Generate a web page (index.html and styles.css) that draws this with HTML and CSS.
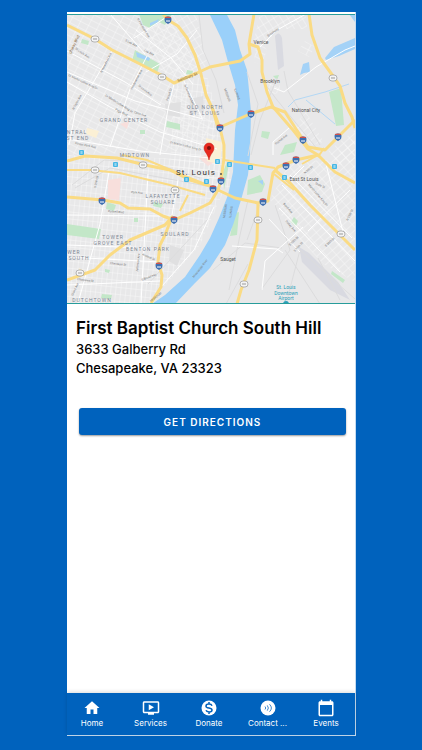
FILE: index.html
```html
<!DOCTYPE html>
<html lang="en">
<head>
    <meta charset="utf-8">
    <meta name="viewport" content="width=device-width, initial-scale=1">
    <title>First Baptist Church South Hill</title>
    <link rel="stylesheet" href="styles.css">
</head>
<body>
<div class="app">
    <div class="map">
        <svg viewBox="67 15 288 288" role="img" aria-label="Map of St. Louis">
            <defs>
                <pattern id="grid-west" width="9" height="6" patternUnits="userSpaceOnUse" patternTransform="rotate(27)">
                    <path d="M0 0H9M0 0V6" class="street"/>
                </pattern>
                <pattern id="grid-north" width="6" height="8" patternUnits="userSpaceOnUse" patternTransform="rotate(-32)">
                    <path d="M0 0H6M0 0V8" class="street"/>
                </pattern>
                <pattern id="grid-south" width="5" height="7" patternUnits="userSpaceOnUse" patternTransform="rotate(6)">
                    <path d="M0 0H5M0 0V7" class="street"/>
                </pattern>
                <pattern id="grid-east" width="6" height="8" patternUnits="userSpaceOnUse" patternTransform="rotate(48)">
                    <path d="M0 0H6M0 0V8" class="street"/>
                </pattern>
                <g id="shield">
                    <path d="M-3-3Q0-4 3-3Q5 2 0 4Q-5 2-3-3Z" fill="#3f6fb0"/>
                    <path d="M-3-3Q0-4 3-3V-2H-3Z" fill="#d0524c"/>
                    <path d="M-2 1H2" stroke="#fff"/>
                </g>
                <g id="route">
                    <rect x="-4" y="-3" width="8" height="6" rx="3" fill="#f4f4f4" stroke="#999" stroke-width=".7"/>
                    <path d="M-2 0H2" stroke="#999"/>
                </g>
                <g id="station">
                    <rect x="-2" y="-2" width="5" height="5" rx="1" fill="#45b7e5"/>
                    <path d="M0-1V2M1-1V2" stroke="#fff" stroke-width=".5"/>
                </g>
            </defs>

            <rect x="67" y="14" width="288" height="290" fill="#e8e8e9"/>

            <!-- street grids -->
            <path d="M67 14H168L201 74L174 83L210 105L217 150L67 155Z" fill="url(#grid-west)"/>
            <path d="M140 14H196L208 66L180 79L134 60Z" fill="url(#grid-north)"/>
            <path d="M67 155L217 160L222 195L200 245L150 303H67Z" fill="url(#grid-south)"/>
            <path d="M174 84L207 76L222 130L233 190L214 185L170 170Z" fill="url(#grid-south)"/>
            <path d="M270 200L290 162L330 160L355 135V282L325 265L300 240Z" fill="url(#grid-east)"/>
            <path d="M260 14H306L307 29L278 29L265 45L254 40Z" fill="url(#grid-north)"/>
            <path d="M256 43H262L267 50L261 65L254 62Z M298 51L305 41L315 47L309 57Z M265 83L280 79L280 92L269 96Z" fill="url(#grid-west)"/>
            <path d="M294 125L306 112L324 142L307 146Z M328 151L355 130V160L340 166Z" fill="url(#grid-east)"/>

            <!-- parks and blocks -->
            <g fill="#c3e7c8">
                <path d="M139 14H172L165 25L159 22L150 28L143 25Z"/>
                <path d="M135 50L160 64L157 73L132 61Z"/>
                <path d="M82 39L89 41L88 45L81 43Z M187 70L193 71L192 75L186 74Z M167 121L180 124V130L166 127Z"/>
                <path d="M329 92L341 88L344 125L336 126Z"/>
                <path d="M248 180L260 175L265 184L262 192L247 195Z"/>
                <path d="M67 224L101 229L99 239L67 235Z M107 202L116 205L114 211L106 209Z M154 202L163 204L161 208L153 206Z"/>
                <path d="M235 213L239 212L237 235L230 236Z M262 131L270 132L268 139L261 137Z M285 145L297 142L294 152L280 155Z"/>
                <path d="M291 222L294 217L298 221L296 226Z M332 271L345 280L343 283L331 274Z M105 269L110 270L109 273L105 272Z M102 294L112 295L111 299L101 298Z M223 172L227 162L229 164L224 190Z"/>
                <path d="M273 76L279 75L277 80Z M134 218H138V222H134Z M140 130H145V134H140Z"/>
            </g>
            <path d="M108 180L121 178L119 200L108 199Z M120 124L129 121L127 129Z M199 158L212 151L218 160L208 166Z" fill="#f8dfdc"/>
            <path d="M87 128L99 131L96 138L86 134Z M206 138L222 142L220 165L207 161Z M79 268L85 271L83 275L78 273Z" fill="#fbf0d5"/>
            <path d="M275 36Q279 30 282 38L284 66L278 70Z M299 247L309 253L338 282L350 300L330 290L302 262Z" fill="#d9dae1"/>
            <path d="M190 99L203 96L204 112L189 115Z M165 104L181 102L180 117L166 115Z M170 245L184 250L177 266L169 261Z" fill="#e0e0e1"/>

            <!-- water -->
            <path d="M210 15H227L235 30L240 50L247 70L249 90L251 112L250 155L248 175L241 200L233 225L225 245L210 268L195 283L175 304H152L165 295L185 277L200 255L210 238L219 218L228 195L233 172L235 130L238 105L235 85L228 62L222 40Z" fill="#9ad0fa"/>
            <path d="M325 58L334 47L355 38V49L339 56L326 60Z M300 75L303 64L309 62L310 72L304 73Z M349 14H355V22Z M136 52L150 58L149 61L137 57Z M150 23L159 19L158 22L150 26Z M258 181L263 180L263 185Z" fill="#a4d2f7"/>
            <path d="M288 107L295 100L325 92L349 84M306 100L335 124" class="creek"/>

            <!-- railways and minor roads -->
            <g class="rail">
                <path d="M247 72L258 104L248 156M277 78L260 120L251 155M262 80L277 100L318 150M284 71L288 91L320 145M199 15L203 50L216 80L224 113"/>
                <path d="M72 185L104 160L150 162L200 178M75 188L110 168L212 187M248 200L240 235L229 290M247 240L260 204M261 290L290 250L275 205M286 304L300 250L355 299"/>
                <path d="M213 270L245 243L282 248M248 264L226 304M285 250L320 304M318 258L340 300M209 218L170 260L148 284"/>
            </g>
            <g class="avenue">
                <path d="M67 72L135 101L203 119M67 82L110 107L160 132L217 149M67 139L140 151L210 158M112 51L75 113L69 145M147 56L130 89L110 147M174 84L168 109L160 155M183 79L202 118"/>
                <path d="M136 30L171 58L193 84M134 38L165 18M110 14L145 54M67 51L125 82L161 105M197 30L177 54L146 72"/>
                <path d="M274 88L284 92L316 67L345 50L355 46M260 47L277 30L306 14M289 128L273 142V155M232 246L277 249L283 253"/>
                <path d="M109 172L100 224L78 303M148 174L141 303M67 215L160 216M67 245L147 248M67 257L160 262M67 285L160 281M214 207L194 250L162 286M178 180L172 215"/>
                <path d="M282 185L355 261M279 208L340 272M290 175L352 238M325 160L345 240M303 227L265 261L262 290M269 219L300 252M350 190L308 231M304 166L286 184"/>
            </g>

            <!-- highways -->
            <g class="highway">
                <path d="M67 25L95 39L112 50L140 64L163 76L174 83L197 73L210 67L240 61L250 54L249 44L254 14"/>
                <path d="M163 14L168 20L178 26L187 38L195 55L201 74L206 95L213 110L220 128L224 145V158L221 180L218 190"/>
                <path d="M213 110L218 128L250 114L271 107L285 112L298 132L308 147L325 150L335 140L355 120"/>
                <path d="M249 44L258 47L262 60L262 72L267 92L273 107L293 130L308 149L318 155"/>
                <path d="M309 14L312 35L320 58L333 76L340 86L345 103L352 117L355 128"/>
                <path d="M67 197L103 200L120 203L128 208L150 209L163 216L174 220L190 213L210 203L218 190L235 198L258 203"/>
                <path d="M67 161L85 156L117 158L145 165L170 170L190 180L210 186"/>
                <path d="M67 280L95 270L110 255L130 240L165 225L172 217L165 235L160 245L158 262L162 275L161 287L151 303"/>
                <path d="M258 203L257 240L249 270L241 290L237 304M258 203L268 201L273 173L278 167L296 160L318 155L335 172L355 183"/>
                <path d="M275 170L290 183L310 205L340 235L355 250"/>
            </g>
            <g class="ramp">
                <path d="M67 170L90 170L120 173L170 185L205 195M122 155L147 160L180 174L215 188M188 195L180 211"/>
                <path d="M224 160L275 168M274 174L294 190M318 155L302 164M324 148L318 157"/>
            </g>

            <g>
                <use href="#shield" x="168" y="20"/>
                <use href="#shield" x="220" y="128"/>
                <use href="#shield" x="251" y="114"/>
                <use href="#shield" x="303" y="140"/>
                <use href="#shield" x="338" y="137"/>
                <use href="#shield" x="102" y="201"/>
                <use href="#shield" x="174" y="220"/>
                <use href="#shield" x="159" y="266"/>
                <use href="#shield" x="213" y="189"/>
                <use href="#shield" x="221" y="181"/>
                <use href="#shield" x="263" y="202"/>
                <use href="#shield" x="286" y="166"/>
                <use href="#shield" x="296" y="160"/>
                <use href="#route" x="95" y="39"/>
                <use href="#route" x="162" y="77"/>
                <use href="#route" x="333" y="78"/>
                <use href="#route" x="95" y="170"/>
                <use href="#route" x="143" y="165"/>
                <use href="#route" x="175" y="190"/>
                <use href="#route" x="80" y="273"/>
                <use href="#route" x="258" y="220"/>
                <use href="#route" x="244" y="284"/>
                <use href="#route" x="341" y="234"/>
                <use href="#station" x="81" y="152"/>
                <use href="#station" x="115" y="164"/>
                <use href="#station" x="186" y="179"/>
                <use href="#station" x="206" y="181"/>
                <use href="#station" x="217" y="161"/>
                <use href="#station" x="229" y="164"/>
                <use href="#station" x="250" y="167"/>
                <use href="#station" x="284" y="177"/>
                <use href="#station" x="334" y="166"/>
            </g>

            <g class="area">
                <text x="124" y="122">GRAND CENTER</text>
                <text x="135" y="157">MIDTOWN</text>
                <text x="205" y="109">OLD NORTH</text>
                <text x="205" y="115">ST. LOUIS</text>
                <text x="77" y="134">NTRAL</text>
                <text x="78" y="140">ST END</text>
                <text x="163" y="198">LAFAYETTE</text>
                <text x="163" y="204">SQUARE</text>
                <text x="175" y="236">SOULARD</text>
                <text x="113" y="239">TOWER</text>
                <text x="113" y="245">GROVE EAST</text>
                <text x="148" y="251">BENTON PARK</text>
                <text x="74" y="254">WER</text>
                <text x="79" y="260">SOUTH</text>
                <text x="92" y="302">DUTCHTOWN</text>
            </g>
            <g class="town">
                <text x="261" y="44">Venice</text>
                <text x="270" y="83">Brooklyn</text>
                <text x="306" y="112">National City</text>
                <text x="304" y="181">East St Louis</text>
                <text x="228" y="261">Sauget</text>
            </g>
            <g class="road">
                <text transform="translate(178 82) rotate(-20)" class="road-brown">Salisbury St</text>
                <text transform="translate(71 54) rotate(-64)" class="road-brown">ghway Blvd</text>
                <text transform="translate(137 19) rotate(59)">N Florissant Ave</text>
                <text transform="translate(125 41) rotate(27)">S Lee Ave</text>
                <text transform="translate(144 51) rotate(27)">Lee Ave</text>
                <text transform="translate(75 49) rotate(35)">St Louis Ave</text>
                <text transform="translate(102 73) rotate(-64)">N Newstead Ave</text>
                <text transform="translate(132 90) rotate(-62)">Vandeventer Ave</text>
                <text transform="translate(138 86) rotate(38)">St Louis Ave</text>
                <text transform="translate(68 76) rotate(25)">Dr Martin Luther King Dr</text>
                <text transform="translate(105 96) rotate(32)">Dr Martin Luther King Dr</text>
                <text transform="translate(115 110) rotate(28)">Page Blvd</text>
                <text transform="translate(134 113) rotate(18)">Cass Ave</text>
                <text transform="translate(74 110) rotate(-62)">N Taylor Ave</text>
                <text transform="translate(168 101) rotate(-72)">Parnell St</text>
                <text transform="translate(184 85) rotate(67)">N Florissant Ave</text>
                <text transform="translate(75 144) rotate(12)">Forest Park Ave</text>
                <text transform="translate(170 143) rotate(14)">Dr Martin Luther King Dr</text>
                <text transform="translate(268 37) rotate(-35)">Broadway</text>
                <text transform="translate(276 145) rotate(-39)">Pocket Ave</text>
                <text transform="translate(131 193) rotate(5)">Park Ave</text>
                <text transform="translate(108 212) rotate(5)">Russell Blvd</text>
                <text transform="translate(96 188) rotate(-78)">S 39th St</text>
                <text transform="translate(110 264) rotate(7)">Cherokee St</text>
                <text transform="translate(77 280) rotate(7)">Chippewa St</text>
                <text transform="translate(138 272) rotate(-84)">Jefferson Ave</text>
                <text transform="translate(142 255) rotate(24)">Arsenal St</text>
                <text transform="translate(142 281) rotate(-22)">S Broadway</text>
                <text transform="translate(73 296) rotate(-65)">Grand Ave</text>
                <text transform="translate(283 204) rotate(49)">Bond Ave</text>
                <text transform="translate(285 221) rotate(49)">Trolley Ave</text>
                <text transform="translate(308 185) rotate(49)">Martin Luther King Dr</text>
                <text transform="translate(315 184) rotate(25)">State St</text>
                <text transform="translate(290 246) rotate(-44)">S 10th St</text>
                <text transform="translate(295 252) rotate(-48)">S 15th St</text>
                <text transform="translate(326 247) rotate(-43)">S 20th St</text>
                <text transform="translate(305 174) rotate(-40)">N 9th St</text>
                <text transform="translate(348 221) rotate(-65)">N 25th St</text>
                <text transform="translate(224 89) rotate(70)">MISSOURI</text>
                <text transform="translate(234 89) rotate(70)">ILLINOIS</text>
                <text transform="translate(225 218) rotate(-81)">MISSOURI</text>
                <text transform="translate(231 218) rotate(-81)">ILLINOIS</text>
                <text transform="translate(151 302) rotate(-38)">MISSOURI</text>
                <text transform="translate(194 278) rotate(-52)">Mississippi River</text>
            </g>
            <g class="airport">
                <text x="286" y="289">St. Louis</text>
                <text x="286" y="295">Downtown</text>
                <text x="286" y="300">Airport</text>
                <circle cx="286" cy="304" r="3"/>
            </g>
            <text x="196" y="175" class="city">St. Louis</text>
            <circle cx="221" cy="174" r="1" fill="#555"/>

            <path d="M209 160C208 154 204 152 204 148A5 5 0 0 1 214 148C214 152 210 154 209 160Z" fill="#e8291f" stroke="#c21d17" stroke-width=".5"/>
            <circle cx="209" cy="148" r="2" fill="#7d110d"/>
        </svg>
    </div>

    <div class="details">
        <h1>First Baptist Church South Hill</h1>
        <p>3633 Galberry Rd</p>
        <p>Chesapeake, VA 23323</p>
        <button type="button" class="directions">GET DIRECTIONS</button>
    </div>

    <nav class="tabs">
        <a href="#home">
            <svg viewBox="0 0 24 24"><path d="M10 20v-6h4v6h5v-8h3L12 3 2 12h3v8z"/></svg>
            <span>Home</span>
        </a>
        <a href="#services">
            <svg viewBox="0 0 24 24"><path d="M21 3H3c-1.100 0-2 .9-2 2v12c0 1.100.9 2 2 2h5v2h8v-2h5c1.100 0 2-.9 2-2V5c0-1.100-.9-2-2-2zm0 14H3V5h18v12zM9 7v8l7-4z"/></svg>
            <span>Services</span>
        </a>
        <a href="#donate">
            <svg viewBox="0 0 24 24">
                <circle cx="12" cy="12" r="10"/>
                <path class="cut" d="M12 4v3M12 17v3M16 9C15 6 8 6 8 9.500C8 13 16 11 16 14.500C16 18 9 18 8 15"/>
            </svg>
            <span>Donate</span>
        </a>
        <a href="#contact">
            <svg viewBox="0 0 24 24">
                <circle cx="12" cy="12" r="10"/>
                <path class="cut thin" d="M8 10Q10 12 8 14M11 8.500Q14 12 11 15.500M14 7Q19 12 14 17"/>
            </svg>
            <span>Contact ...</span>
        </a>
        <a href="#events">
            <svg viewBox="0 0 24 24"><path d="M20 3h-1V1h-2v2H7V1H5v2H4c-1.100 0-2 .9-2 2v16c0 1.100.9 2 2 2h16c1.100 0 2-.9 2-2V5c0-1.100-.9-2-2-2zm0 18H4V8h16v13z"/></svg>
            <span>Events</span>
        </a>
    </nav>
</div>
</body>
</html>
```
FILE: styles.css
```css
* {
    box-sizing: border-box;
}

body {
    margin: 0;
    padding: 12px 66px 14px 67px;
    min-height: 100vh;
    display: flex;
    background-color: #0062bd;
    font-family: Inter, "Liberation Sans", sans-serif;
    color: #000;
}

.app {
    flex: 1;
    min-width: 0;
    display: flex;
    flex-direction: column;
    background-color: #fff;
    border-right: 1px solid #c5dbf0;
    border-bottom: 1px solid #c5dbf0;
}

.map {
    margin-top: 2px;
    border-top: 1px solid #279c9b;
    border-bottom: 1px solid #279c9b;
}

.map svg {
    display: block;
    width: 100%;
}

.street {
    fill: none;
    stroke: #f8f8f8;
    stroke-width: 1;
}

.avenue {
    fill: none;
    stroke: #fff;
    stroke-width: 1;
}

.rail {
    fill: none;
    stroke: #dcdcdd;
    stroke-width: 1;
}

.creek {
    fill: none;
    stroke: #b4d8f5;
    stroke-width: 1;
}

.highway {
    fill: none;
    stroke: #fadb84;
    stroke-width: 3;
    stroke-linejoin: round;
}

.ramp {
    fill: none;
    stroke: #fadb84;
    stroke-width: 2;
}

.area,
.town,
.airport {
    font-family: Roboto, sans-serif;
    font-size: 5px;
    text-anchor: middle;
}

.area {
    fill: #7d8794;
    letter-spacing: 1px;
}

.town {
    fill: #555;
}

.airport {
    fill: #2b9fb8;
}

.road {
    font-family: Roboto, sans-serif;
    font-size: 3px;
    fill: #777;
}

.road-brown {
    font-size: 4px;
    fill: #8b6f46;
}

.city {
    font-family: Roboto, sans-serif;
    font-size: 8px;
    fill: #333;
    text-anchor: middle;
    letter-spacing: 1px;
}

.details {
    flex: 1;
    padding: 13px 9px;
}

h1 {
    margin: 0;
    font-size: 17px;
    line-height: 23px;
    font-weight: 600;
    white-space: nowrap;
}

p {
    margin: 0;
    font-size: 13px;
    line-height: 19px;
    font-weight: 500;
}

.directions {
    display: block;
    width: calc(100% - 3px);
    height: 27px;
    margin: 30px 0 0 3px;
    padding: 0;
    border: none;
    border-radius: 3px;
    background-color: #0062bd;
    box-shadow: 0 1px 2px #00000066;
    color: #fff;
    font-family: inherit;
    font-size: 10px;
    font-weight: 600;
    letter-spacing: 1px;
    cursor: pointer;
}

.tabs {
    display: flex;
    justify-content: space-between;
    height: 42px;
    padding-right: 4px;
    background-color: #0062bd;
    box-shadow: 0 -1px 4px #00000026;
}

.tabs a {
    width: 50px;
    display: flex;
    flex-direction: column;
    align-items: center;
    padding-top: 6px;
    color: #fff;
    font-size: 8px;
    line-height: 12px;
    text-decoration: none;
    white-space: nowrap;
}

.tabs svg {
    width: 18px;
    height: 18px;
    fill: #fff;
}

.tabs .cut {
    fill: none;
    stroke: #0062bd;
    stroke-width: 2;
}

.tabs .thin {
    stroke-width: 1;
}
```
